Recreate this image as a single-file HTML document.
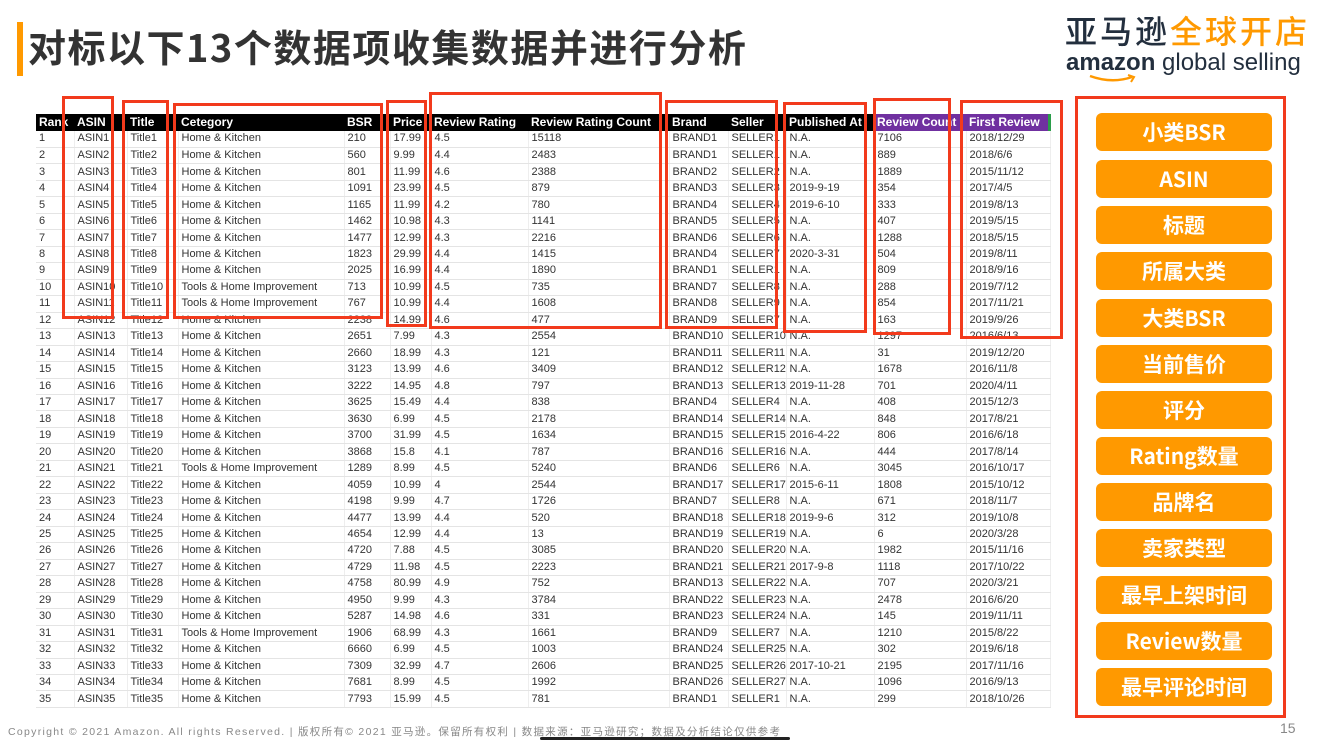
<!DOCTYPE html>
<html><head><meta charset="utf-8"><style>
*{margin:0;padding:0;box-sizing:border-box}
body{width:1319px;height:739px;background:#fff;position:relative;overflow:hidden;font-family:"Liberation Sans","Noto Sans CJK SC",sans-serif}
.bar{position:absolute;left:17px;top:22px;width:6px;height:54px;background:#f90}
.title{position:absolute;left:28px;top:20px;font-size:38px;font-weight:bold;color:#333;line-height:52px;letter-spacing:1.5px;font-family:"Noto Sans CJK SC","Liberation Sans",sans-serif}
.logo1{position:absolute;left:1065px;top:12px;font-size:32px;font-weight:500;line-height:36px;font-family:"Noto Sans CJK SC",sans-serif;letter-spacing:3px}
.logo2{position:absolute;left:1066px;top:50px;font-size:24px;line-height:26px;color:#232f3e;letter-spacing:0px}
table{position:absolute;left:36px;top:114px;border-collapse:collapse;table-layout:fixed;width:1014px;font-size:11px;color:#333}
td{height:16.47px;line-height:15px;padding:0 0 0 3px;white-space:nowrap;overflow:hidden;border-bottom:1px solid #e4e4e4;border-right:1px solid #eee}
tr.h td{background:#000;color:#fff;font-weight:bold;font-size:12px;height:17px;border:none}
tr.h td.p{background:#7030a0}
.box{position:absolute;border:3px solid #f23a1c}
.btn{position:absolute;left:1096px;width:176px;height:38px;background:#f90;border-radius:6px;color:#fff;font-weight:bold;font-size:21px;text-align:center;line-height:38px;font-family:"Noto Sans CJK SC","Liberation Sans",sans-serif}
.foot{position:absolute;left:8px;top:724px;font-size:10.5px;color:#888;letter-spacing:1.3px}
.pg{position:absolute;left:1280px;top:720px;font-size:14px;color:#888}
</style></head><body>
<div class="bar"></div>
<div class="title">对标以下13个数据项收集数据并进行分析</div>
<div class="logo1"><span style="color:#232f3e">亚马逊</span><span style="color:#f90">全球开店</span></div>
<div class="logo2"><b>amazon</b> global selling</div>
<svg style="position:absolute;left:1088px;top:74px" width="50" height="10"><path d="M2 2 Q24 10 44 3" stroke="#f90" stroke-width="2.5" fill="none"/><path d="M40 1 L46 3 L43 8" stroke="#f90" stroke-width="2" fill="none"/></svg>
<table>
<colgroup><col style="width:38px"><col style="width:53px"><col style="width:51px"><col style="width:166px"><col style="width:46px"><col style="width:41px"><col style="width:97px"><col style="width:141px"><col style="width:59px"><col style="width:58px"><col style="width:88px"><col style="width:92px"><col style="width:84px"></colgroup>
<tr class="h"><td>Rank</td><td>ASIN</td><td>Title</td><td>Cetegory</td><td>BSR</td><td>Price</td><td>Review Rating</td><td>Review Rating Count</td><td>Brand</td><td>Seller</td><td>Published At</td><td class="p">Review Count</td><td class="p">First Review</td></tr>
<tr><td>1</td><td>ASIN1</td><td>Title1</td><td>Home &amp; Kitchen</td><td>210</td><td>17.99</td><td>4.5</td><td>15118</td><td>BRAND1</td><td>SELLER1</td><td>N.A.</td><td>7106</td><td>2018/12/29</td></tr>
<tr><td>2</td><td>ASIN2</td><td>Title2</td><td>Home &amp; Kitchen</td><td>560</td><td>9.99</td><td>4.4</td><td>2483</td><td>BRAND1</td><td>SELLER1</td><td>N.A.</td><td>889</td><td>2018/6/6</td></tr>
<tr><td>3</td><td>ASIN3</td><td>Title3</td><td>Home &amp; Kitchen</td><td>801</td><td>11.99</td><td>4.6</td><td>2388</td><td>BRAND2</td><td>SELLER2</td><td>N.A.</td><td>1889</td><td>2015/11/12</td></tr>
<tr><td>4</td><td>ASIN4</td><td>Title4</td><td>Home &amp; Kitchen</td><td>1091</td><td>23.99</td><td>4.5</td><td>879</td><td>BRAND3</td><td>SELLER3</td><td>2019-9-19</td><td>354</td><td>2017/4/5</td></tr>
<tr><td>5</td><td>ASIN5</td><td>Title5</td><td>Home &amp; Kitchen</td><td>1165</td><td>11.99</td><td>4.2</td><td>780</td><td>BRAND4</td><td>SELLER4</td><td>2019-6-10</td><td>333</td><td>2019/8/13</td></tr>
<tr><td>6</td><td>ASIN6</td><td>Title6</td><td>Home &amp; Kitchen</td><td>1462</td><td>10.98</td><td>4.3</td><td>1141</td><td>BRAND5</td><td>SELLER5</td><td>N.A.</td><td>407</td><td>2019/5/15</td></tr>
<tr><td>7</td><td>ASIN7</td><td>Title7</td><td>Home &amp; Kitchen</td><td>1477</td><td>12.99</td><td>4.3</td><td>2216</td><td>BRAND6</td><td>SELLER6</td><td>N.A.</td><td>1288</td><td>2018/5/15</td></tr>
<tr><td>8</td><td>ASIN8</td><td>Title8</td><td>Home &amp; Kitchen</td><td>1823</td><td>29.99</td><td>4.4</td><td>1415</td><td>BRAND4</td><td>SELLER7</td><td>2020-3-31</td><td>504</td><td>2019/8/11</td></tr>
<tr><td>9</td><td>ASIN9</td><td>Title9</td><td>Home &amp; Kitchen</td><td>2025</td><td>16.99</td><td>4.4</td><td>1890</td><td>BRAND1</td><td>SELLER1</td><td>N.A.</td><td>809</td><td>2018/9/16</td></tr>
<tr><td>10</td><td>ASIN10</td><td>Title10</td><td>Tools &amp; Home Improvement</td><td>713</td><td>10.99</td><td>4.5</td><td>735</td><td>BRAND7</td><td>SELLER8</td><td>N.A.</td><td>288</td><td>2019/7/12</td></tr>
<tr><td>11</td><td>ASIN11</td><td>Title11</td><td>Tools &amp; Home Improvement</td><td>767</td><td>10.99</td><td>4.4</td><td>1608</td><td>BRAND8</td><td>SELLER9</td><td>N.A.</td><td>854</td><td>2017/11/21</td></tr>
<tr><td>12</td><td>ASIN12</td><td>Title12</td><td>Home &amp; Kitchen</td><td>2238</td><td>14.99</td><td>4.6</td><td>477</td><td>BRAND9</td><td>SELLER7</td><td>N.A.</td><td>163</td><td>2019/9/26</td></tr>
<tr><td>13</td><td>ASIN13</td><td>Title13</td><td>Home &amp; Kitchen</td><td>2651</td><td>7.99</td><td>4.3</td><td>2554</td><td>BRAND10</td><td>SELLER10</td><td>N.A.</td><td>1297</td><td>2016/6/13</td></tr>
<tr><td>14</td><td>ASIN14</td><td>Title14</td><td>Home &amp; Kitchen</td><td>2660</td><td>18.99</td><td>4.3</td><td>121</td><td>BRAND11</td><td>SELLER11</td><td>N.A.</td><td>31</td><td>2019/12/20</td></tr>
<tr><td>15</td><td>ASIN15</td><td>Title15</td><td>Home &amp; Kitchen</td><td>3123</td><td>13.99</td><td>4.6</td><td>3409</td><td>BRAND12</td><td>SELLER12</td><td>N.A.</td><td>1678</td><td>2016/11/8</td></tr>
<tr><td>16</td><td>ASIN16</td><td>Title16</td><td>Home &amp; Kitchen</td><td>3222</td><td>14.95</td><td>4.8</td><td>797</td><td>BRAND13</td><td>SELLER13</td><td>2019-11-28</td><td>701</td><td>2020/4/11</td></tr>
<tr><td>17</td><td>ASIN17</td><td>Title17</td><td>Home &amp; Kitchen</td><td>3625</td><td>15.49</td><td>4.4</td><td>838</td><td>BRAND4</td><td>SELLER4</td><td>N.A.</td><td>408</td><td>2015/12/3</td></tr>
<tr><td>18</td><td>ASIN18</td><td>Title18</td><td>Home &amp; Kitchen</td><td>3630</td><td>6.99</td><td>4.5</td><td>2178</td><td>BRAND14</td><td>SELLER14</td><td>N.A.</td><td>848</td><td>2017/8/21</td></tr>
<tr><td>19</td><td>ASIN19</td><td>Title19</td><td>Home &amp; Kitchen</td><td>3700</td><td>31.99</td><td>4.5</td><td>1634</td><td>BRAND15</td><td>SELLER15</td><td>2016-4-22</td><td>806</td><td>2016/6/18</td></tr>
<tr><td>20</td><td>ASIN20</td><td>Title20</td><td>Home &amp; Kitchen</td><td>3868</td><td>15.8</td><td>4.1</td><td>787</td><td>BRAND16</td><td>SELLER16</td><td>N.A.</td><td>444</td><td>2017/8/14</td></tr>
<tr><td>21</td><td>ASIN21</td><td>Title21</td><td>Tools &amp; Home Improvement</td><td>1289</td><td>8.99</td><td>4.5</td><td>5240</td><td>BRAND6</td><td>SELLER6</td><td>N.A.</td><td>3045</td><td>2016/10/17</td></tr>
<tr><td>22</td><td>ASIN22</td><td>Title22</td><td>Home &amp; Kitchen</td><td>4059</td><td>10.99</td><td>4</td><td>2544</td><td>BRAND17</td><td>SELLER17</td><td>2015-6-11</td><td>1808</td><td>2015/10/12</td></tr>
<tr><td>23</td><td>ASIN23</td><td>Title23</td><td>Home &amp; Kitchen</td><td>4198</td><td>9.99</td><td>4.7</td><td>1726</td><td>BRAND7</td><td>SELLER8</td><td>N.A.</td><td>671</td><td>2018/11/7</td></tr>
<tr><td>24</td><td>ASIN24</td><td>Title24</td><td>Home &amp; Kitchen</td><td>4477</td><td>13.99</td><td>4.4</td><td>520</td><td>BRAND18</td><td>SELLER18</td><td>2019-9-6</td><td>312</td><td>2019/10/8</td></tr>
<tr><td>25</td><td>ASIN25</td><td>Title25</td><td>Home &amp; Kitchen</td><td>4654</td><td>12.99</td><td>4.4</td><td>13</td><td>BRAND19</td><td>SELLER19</td><td>N.A.</td><td>6</td><td>2020/3/28</td></tr>
<tr><td>26</td><td>ASIN26</td><td>Title26</td><td>Home &amp; Kitchen</td><td>4720</td><td>7.88</td><td>4.5</td><td>3085</td><td>BRAND20</td><td>SELLER20</td><td>N.A.</td><td>1982</td><td>2015/11/16</td></tr>
<tr><td>27</td><td>ASIN27</td><td>Title27</td><td>Home &amp; Kitchen</td><td>4729</td><td>11.98</td><td>4.5</td><td>2223</td><td>BRAND21</td><td>SELLER21</td><td>2017-9-8</td><td>1118</td><td>2017/10/22</td></tr>
<tr><td>28</td><td>ASIN28</td><td>Title28</td><td>Home &amp; Kitchen</td><td>4758</td><td>80.99</td><td>4.9</td><td>752</td><td>BRAND13</td><td>SELLER22</td><td>N.A.</td><td>707</td><td>2020/3/21</td></tr>
<tr><td>29</td><td>ASIN29</td><td>Title29</td><td>Home &amp; Kitchen</td><td>4950</td><td>9.99</td><td>4.3</td><td>3784</td><td>BRAND22</td><td>SELLER23</td><td>N.A.</td><td>2478</td><td>2016/6/20</td></tr>
<tr><td>30</td><td>ASIN30</td><td>Title30</td><td>Home &amp; Kitchen</td><td>5287</td><td>14.98</td><td>4.6</td><td>331</td><td>BRAND23</td><td>SELLER24</td><td>N.A.</td><td>145</td><td>2019/11/11</td></tr>
<tr><td>31</td><td>ASIN31</td><td>Title31</td><td>Tools &amp; Home Improvement</td><td>1906</td><td>68.99</td><td>4.3</td><td>1661</td><td>BRAND9</td><td>SELLER7</td><td>N.A.</td><td>1210</td><td>2015/8/22</td></tr>
<tr><td>32</td><td>ASIN32</td><td>Title32</td><td>Home &amp; Kitchen</td><td>6660</td><td>6.99</td><td>4.5</td><td>1003</td><td>BRAND24</td><td>SELLER25</td><td>N.A.</td><td>302</td><td>2019/6/18</td></tr>
<tr><td>33</td><td>ASIN33</td><td>Title33</td><td>Home &amp; Kitchen</td><td>7309</td><td>32.99</td><td>4.7</td><td>2606</td><td>BRAND25</td><td>SELLER26</td><td>2017-10-21</td><td>2195</td><td>2017/11/16</td></tr>
<tr><td>34</td><td>ASIN34</td><td>Title34</td><td>Home &amp; Kitchen</td><td>7681</td><td>8.99</td><td>4.5</td><td>1992</td><td>BRAND26</td><td>SELLER27</td><td>N.A.</td><td>1096</td><td>2016/9/13</td></tr>
<tr><td>35</td><td>ASIN35</td><td>Title35</td><td>Home &amp; Kitchen</td><td>7793</td><td>15.99</td><td>4.5</td><td>781</td><td>BRAND1</td><td>SELLER1</td><td>N.A.</td><td>299</td><td>2018/10/26</td></tr>
</table>
<div style="position:absolute;left:1048px;top:114px;width:3px;height:17px;background:#2a9d4a"></div>
<div class="box" style="left:62px;top:96px;width:52px;height:223px"></div>
<div class="box" style="left:122px;top:100px;width:47px;height:219px"></div>
<div class="box" style="left:173px;top:103px;width:210px;height:216px"></div>
<div class="box" style="left:386px;top:100px;width:41px;height:227px"></div>
<div class="box" style="left:429px;top:92px;width:233px;height:237px"></div>
<div class="box" style="left:665px;top:100px;width:113px;height:229px"></div>
<div class="box" style="left:783px;top:102px;width:84px;height:231px"></div>
<div class="box" style="left:873px;top:98px;width:78px;height:237px"></div>
<div class="box" style="left:960px;top:100px;width:103px;height:239px"></div>
<div class="box" style="left:1075px;top:96px;width:211px;height:622px"></div>
<div class="btn" style="top:113px">小类BSR</div>
<div class="btn" style="top:160px">ASIN</div>
<div class="btn" style="top:206px">标题</div>
<div class="btn" style="top:252px">所属大类</div>
<div class="btn" style="top:299px">大类BSR</div>
<div class="btn" style="top:345px">当前售价</div>
<div class="btn" style="top:391px">评分</div>
<div class="btn" style="top:437px">Rating数量</div>
<div class="btn" style="top:483px">品牌名</div>
<div class="btn" style="top:529px">卖家类型</div>
<div class="btn" style="top:576px">最早上架时间</div>
<div class="btn" style="top:622px">Review数量</div>
<div class="btn" style="top:668px">最早评论时间</div>
<div class="foot">Copyright © 2021 Amazon. All rights Reserved. | 版权所有© 2021 亚马逊。保留所有权利 | 数据来源：亚马逊研究；数据及分析结论仅供参考</div>
<div style="position:absolute;left:540px;top:737px;width:250px;height:3px;background:#222;border-radius:2px"></div>
<div class="pg">15</div>
</body></html>
